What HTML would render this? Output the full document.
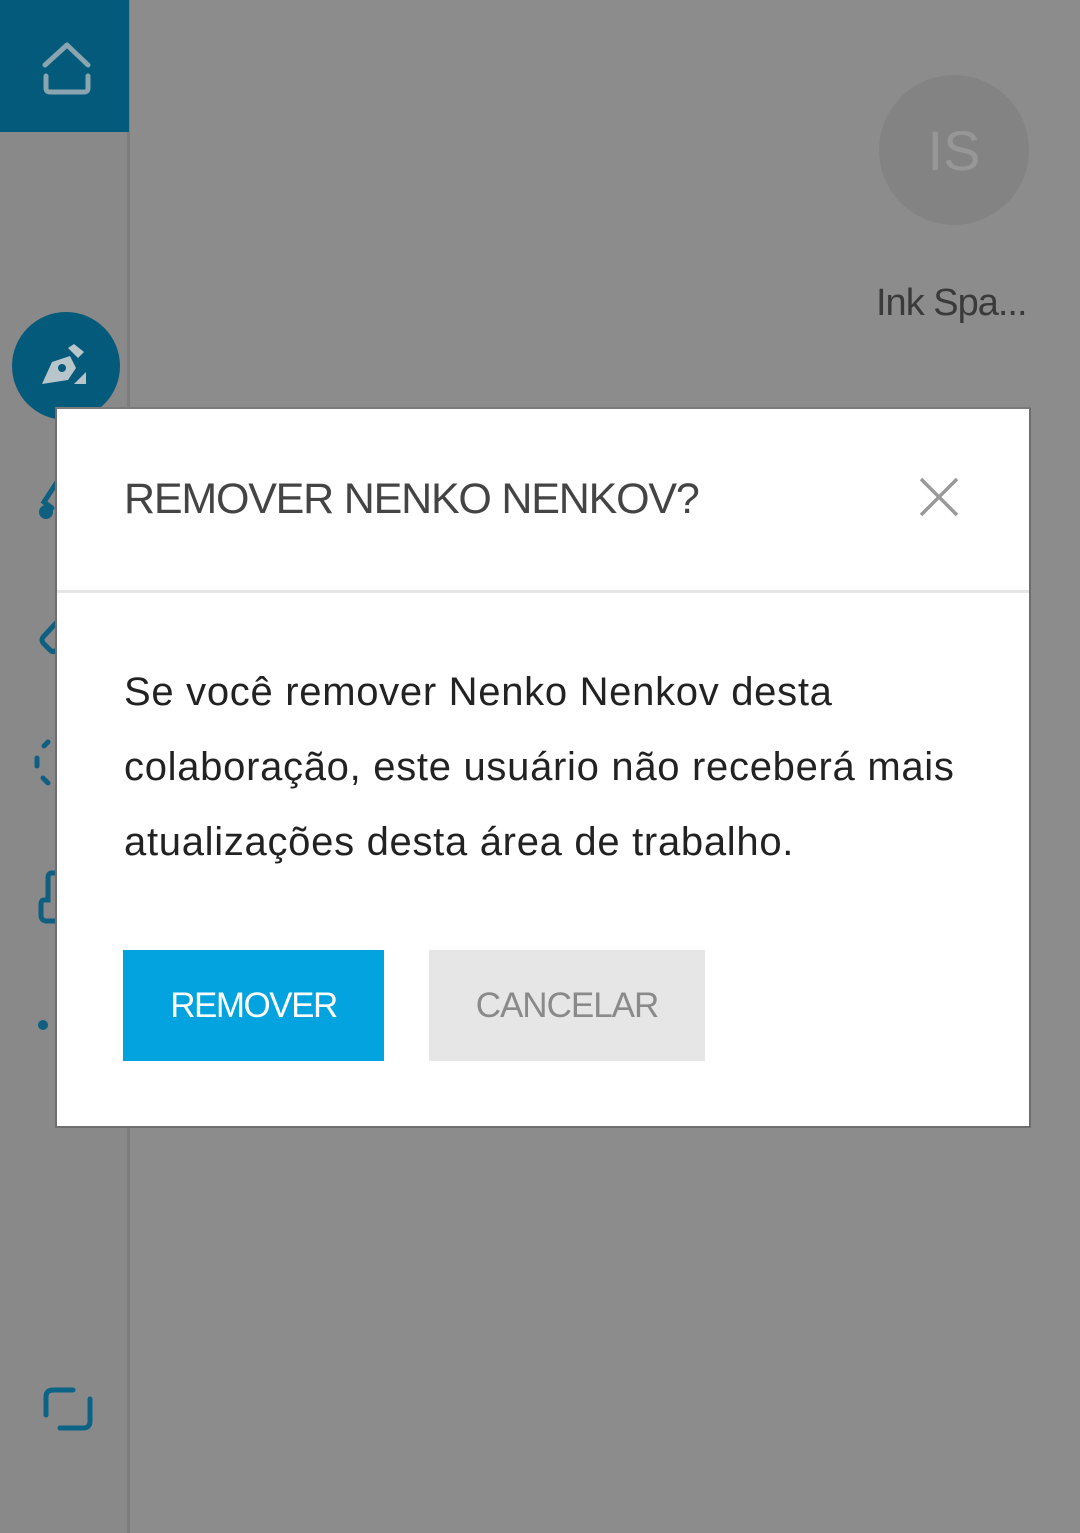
<!DOCTYPE html>
<html><head><meta charset="utf-8"><style>
*{margin:0;padding:0;box-sizing:border-box}
body{width:1080px;height:1533px;background:#8c8c8c;position:relative;overflow:hidden;font-family:"Liberation Sans",Roboto,sans-serif}
.side{position:absolute;left:0;top:0;width:130px;height:1533px;background:#898989;border-right:3px solid #7d7d7d}
.home{position:absolute;left:0;top:0;width:129px;height:132px;background:#035a7b}
.pen{position:absolute;left:12px;top:312px;width:108px;height:108px;border-radius:50%;background:#035a7b}
.avatar{position:absolute;left:879px;top:75px;width:150px;height:150px;border-radius:50%;background:#838383;color:#979797;font-size:56px;text-align:center;line-height:152px}
.ink{position:absolute;left:876px;top:282px;font-size:38px;color:#3a3a3a;letter-spacing:-1px}
.dlg{position:absolute;left:55px;top:407px;width:976px;height:721px;background:#fff;border:2px solid #6e6e6e;border-top:2px solid #7a7a7a}
.title{position:absolute;left:67px;top:66px;font-size:43px;color:#444;letter-spacing:-1.2px}
.x{position:absolute;left:862px;top:68px}
.hr{position:absolute;left:0;top:181px;width:100%;height:3px;background:#e6e6e6}
.body{position:absolute;left:67px;top:246px;width:900px;font-size:40px;line-height:75px;color:#222;letter-spacing:0.7px}
.b1{position:absolute;left:66px;top:541px;width:261px;height:111px;background:#03a3e0;color:#fff;font-size:35px;text-align:center;line-height:111px;letter-spacing:-1.5px}
.b2{position:absolute;left:372px;top:541px;width:276px;height:111px;background:#e6e6e6;color:#8a8a8a;font-size:35px;text-align:center;line-height:111px;letter-spacing:-1px}
</style></head><body>
<div class="side"></div>
<div class="home"><svg width="129" height="132"><g fill="none" stroke="#8aa4b0" stroke-width="5" stroke-linecap="round" stroke-linejoin="round"><path d="M45 65 L67 45 L88 65"/><path d="M46 76 V88 Q46 92 50 92 H84 Q88 92 88 88 V76"/></g></svg></div>
<div class="pen"><svg width="108" height="108"><path d="M30 72 L40 50 L58 44 L64 56 L56 68 Z" fill="#b8c5cb"/><circle cx="50" cy="56" r="4" fill="#035a7b"/><path d="M56 36 L62 32 L72 40 L66 46 Z" fill="#b8c5cb"/><path d="M62 72 L74 60 L74 72 Z" fill="#b8c5cb"/></svg></div>
<svg style="position:absolute;left:0;top:460px" width="60" height="600"><g fill="none" stroke="#0e5f80" stroke-width="5" stroke-linecap="round"><path d="M57 22 L44 42 L52 48"/><circle cx="46" cy="52" r="7" fill="#0e5f80" stroke="none"/><path d="M57 162 L44 176 Q40 180 44 184 L50 190 Q53 193 57 190"/><path d="M48 282 L44 286"/><path d="M37 298 V306"/><path d="M43 318 L48 323"/><path d="M57 413 H52 Q48 413 48 418 V440 H44 Q41 440 41 445 V455 Q41 461 47 461 H57"/></g><circle cx="43" cy="565" r="5" fill="#0e5f80"/></svg>
<svg style="position:absolute;left:40px;top:1385px" width="60" height="60"><g fill="none" stroke="#0b6385" stroke-width="5" stroke-linecap="round"><path d="M6 30 V12 Q6 5 13 5 H33"/><path d="M50 14 V36 Q50 43 43 43 H20"/></g></svg>
<div class="avatar">IS</div>
<div class="ink">Ink Spa...</div>
<div class="dlg">
<div class="title">REMOVER NENKO NENKOV?</div>
<svg class="x" width="40" height="40"><g stroke="#999" stroke-width="3.5"><path d="M2 2 L38 38 M38 2 L2 38"/></g></svg>
<div class="hr"></div>
<div class="body">Se você remover Nenko Nenkov desta<br>colaboração, este usuário não receberá mais<br>atualizações desta área de trabalho.</div>
<div class="b1">REMOVER</div>
<div class="b2">CANCELAR</div>
</div>
</body></html>
